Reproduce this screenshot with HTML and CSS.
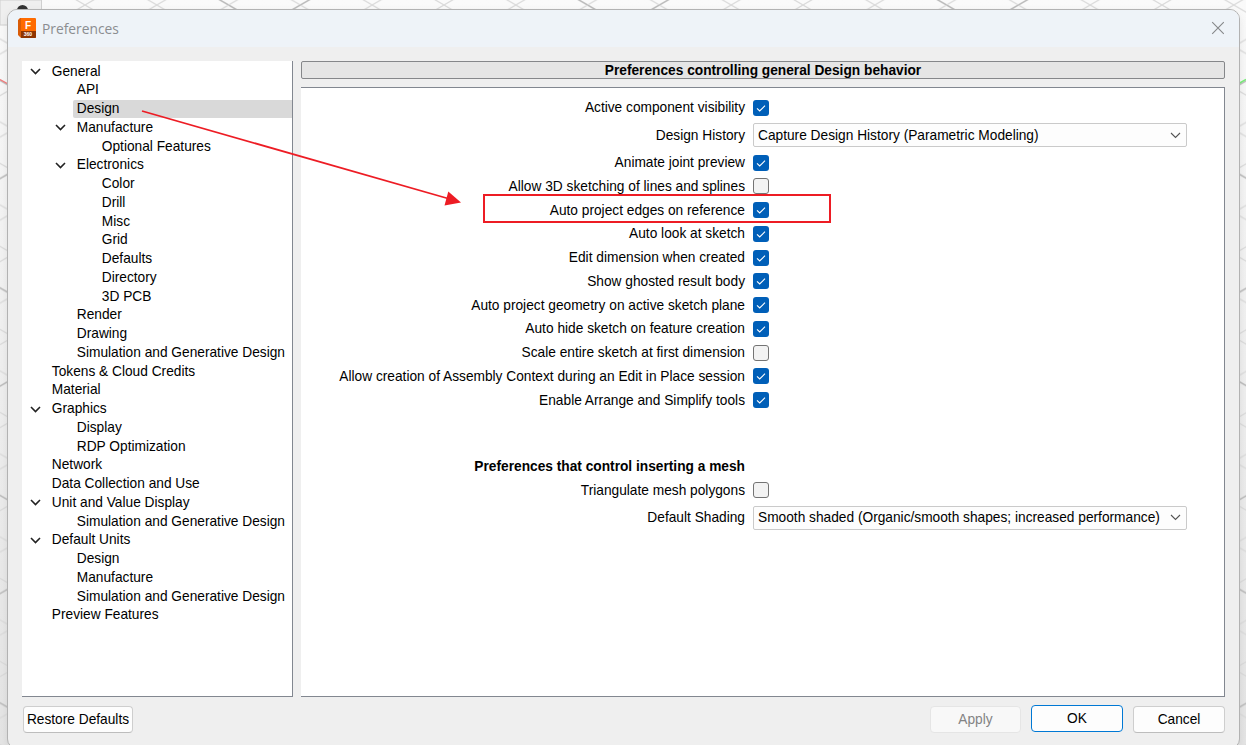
FILE: index.html
```html
<!DOCTYPE html>
<html lang="en">
<head>
<meta charset="utf-8">
<title>Preferences</title>
<link rel="stylesheet" href="styles.css">
</head>
<body>
<svg class="canvas" width="1246" height="745" aria-hidden="true">
  <defs>
    <linearGradient id="sky" x1="0" y1="0" x2="0" y2="1"><stop offset="0" stop-color="#fafafa"/><stop offset=".25" stop-color="#f4f4f4"/><stop offset="1" stop-color="#e4e4e4"/></linearGradient>
    <pattern id="minor" x="85" y="5" width="71.8" height="41.5" patternUnits="userSpaceOnUse"><path d="M0 0L71.8 41.5M0 41.5L71.8 0" stroke="#dadada" stroke-width="1.2"/></pattern>
    <pattern id="major" x="228.6" y="5" width="359" height="207.5" patternUnits="userSpaceOnUse"><path d="M0 0L359 207.5M0 41.5L71.8 0M71.8 207.5L359 41.5" stroke="#b8b8b8" stroke-width="1.3"/></pattern>
  </defs>
  <rect width="1246" height="745" fill="url(#sky)"/>
  <rect width="1246" height="745" fill="url(#minor)"/>
  <rect width="1246" height="745" fill="url(#major)"/>
  <path d="M0 79.5L9 84.5" stroke="#f57b7b" stroke-width="1.3"/>
  <path d="M1238 84L1246 79.5" stroke="#79ee79" stroke-width="1.5"/>
  <path d="M0 0H41.5V25H0Z" fill="#efefef" stroke="#d0d0d0"/>
  <circle cx="22.5" cy="10.500" r="5.5" fill="#333"/>
</svg>
<main class="dialog">
  <header class="titlebar">
    <svg class="logo" width="18" height="20" viewBox="0 0 18 20"><path d="M2 0H16.5Q18 0 18 1.5V19Q18 20 17 20H3L0 17V2Z" fill="#d95c08"/><path d="M3 0H16.5Q18 0 18 1.5V13H3Z" fill="#ff6b00"/><path d="M3 13H18V19Q18 20 17 20H3Z" fill="#8f3500"/><text x="7" y="10.5" class="logo-letter">F</text><text x="5.8" y="18.2" class="logo-number">360</text></svg>
    <h1 class="title">Preferences</h1>
    <svg class="close" width="14" height="14" viewBox="0 0 14 14"><path d="M1.2 1.2L12.8 12.8M12.8 1.2L1.2 12.8" fill="none" stroke="#858789" stroke-width="1.1"/></svg>
  </header>
  <div class="content">
    <nav class="tree">
      <div class="node open"><svg class="twist" viewBox="0 0 11 7"><path d="M1 1L5.5 5.5L10 1"/></svg><span class="name">General</span></div>
      <div class="node l1"><span class="name">API</span></div>
      <div class="node l1"><span class="name selected">Design</span></div>
      <div class="node l1 open"><svg class="twist" viewBox="0 0 11 7"><path d="M1 1L5.5 5.5L10 1"/></svg><span class="name">Manufacture</span></div>
      <div class="node l2"><span class="name">Optional Features</span></div>
      <div class="node l1 open"><svg class="twist" viewBox="0 0 11 7"><path d="M1 1L5.5 5.5L10 1"/></svg><span class="name">Electronics</span></div>
      <div class="node l2"><span class="name">Color</span></div>
      <div class="node l2"><span class="name">Drill</span></div>
      <div class="node l2"><span class="name">Misc</span></div>
      <div class="node l2"><span class="name">Grid</span></div>
      <div class="node l2"><span class="name">Defaults</span></div>
      <div class="node l2"><span class="name">Directory</span></div>
      <div class="node l2"><span class="name">3D PCB</span></div>
      <div class="node l1"><span class="name">Render</span></div>
      <div class="node l1"><span class="name">Drawing</span></div>
      <div class="node l1"><span class="name">Simulation and Generative Design</span></div>
      <div class="node"><span class="name">Tokens &amp; Cloud Credits</span></div>
      <div class="node"><span class="name">Material</span></div>
      <div class="node open"><svg class="twist" viewBox="0 0 11 7"><path d="M1 1L5.5 5.5L10 1"/></svg><span class="name">Graphics</span></div>
      <div class="node l1"><span class="name">Display</span></div>
      <div class="node l1"><span class="name">RDP Optimization</span></div>
      <div class="node"><span class="name">Network</span></div>
      <div class="node"><span class="name">Data Collection and Use</span></div>
      <div class="node open"><svg class="twist" viewBox="0 0 11 7"><path d="M1 1L5.5 5.5L10 1"/></svg><span class="name">Unit and Value Display</span></div>
      <div class="node l1"><span class="name">Simulation and Generative Design</span></div>
      <div class="node open"><svg class="twist" viewBox="0 0 11 7"><path d="M1 1L5.5 5.5L10 1"/></svg><span class="name">Default Units</span></div>
      <div class="node l1"><span class="name">Design</span></div>
      <div class="node l1"><span class="name">Manufacture</span></div>
      <div class="node l1"><span class="name">Simulation and Generative Design</span></div>
      <div class="node"><span class="name">Preview Features</span></div>
    </nav>
    <section class="pane">
      <h2 class="banner">Preferences controlling general Design behavior</h2>
      <div class="form">
        <div class="field"><span class="label">Active component visibility</span><span class="check on"><svg viewBox="0 0 16 16"><path d="M4 8.3L6.7 11L12 5.7"/></svg></span></div>
        <div class="field tall"><span class="label">Design History</span><div class="select"><span>Capture Design History (Parametric Modeling)</span><svg class="caret" viewBox="0 0 11 7"><path d="M1 1L5.5 5.5L10 1"/></svg></div></div>
        <div class="field"><span class="label">Animate joint preview</span><span class="check on"><svg viewBox="0 0 16 16"><path d="M4 8.3L6.7 11L12 5.7"/></svg></span></div>
        <div class="field"><span class="label">Allow 3D sketching of lines and splines</span><span class="check"></span></div>
        <div class="field"><span class="label">Auto project edges on reference</span><span class="check on"><svg viewBox="0 0 16 16"><path d="M4 8.3L6.7 11L12 5.7"/></svg></span></div>
        <div class="field"><span class="label">Auto look at sketch</span><span class="check on"><svg viewBox="0 0 16 16"><path d="M4 8.3L6.7 11L12 5.7"/></svg></span></div>
        <div class="field"><span class="label">Edit dimension when created</span><span class="check on"><svg viewBox="0 0 16 16"><path d="M4 8.3L6.7 11L12 5.7"/></svg></span></div>
        <div class="field"><span class="label">Show ghosted result body</span><span class="check on"><svg viewBox="0 0 16 16"><path d="M4 8.3L6.7 11L12 5.7"/></svg></span></div>
        <div class="field"><span class="label">Auto project geometry on active sketch plane</span><span class="check on"><svg viewBox="0 0 16 16"><path d="M4 8.3L6.7 11L12 5.7"/></svg></span></div>
        <div class="field"><span class="label">Auto hide sketch on feature creation</span><span class="check on"><svg viewBox="0 0 16 16"><path d="M4 8.3L6.7 11L12 5.7"/></svg></span></div>
        <div class="field"><span class="label">Scale entire sketch at first dimension</span><span class="check"></span></div>
        <div class="field"><span class="label">Allow creation of Assembly Context during an Edit in Place session</span><span class="check on"><svg viewBox="0 0 16 16"><path d="M4 8.3L6.7 11L12 5.7"/></svg></span></div>
        <div class="field"><span class="label">Enable Arrange and Simplify tools</span><span class="check on"><svg viewBox="0 0 16 16"><path d="M4 8.3L6.7 11L12 5.7"/></svg></span></div>
        <div class="field mesh"><span class="label heading">Preferences that control inserting a mesh</span></div>
        <div class="field"><span class="label">Triangulate mesh polygons</span><span class="check"></span></div>
        <div class="field tall"><span class="label">Default Shading</span><div class="select"><span>Smooth shaded (Organic/smooth shapes; increased performance)</span><svg class="caret" viewBox="0 0 11 7"><path d="M1 1L5.5 5.5L10 1"/></svg></div></div>
      </div>
    </section>
  </div>
  <footer class="actions">
    <button class="btn restore">Restore Defaults</button>
    <button class="btn apply" disabled>Apply</button>
    <button class="btn primary">OK</button>
    <button class="btn">Cancel</button>
  </footer>
</main>
<svg class="markup" width="1246" height="745" aria-hidden="true">
  <path d="M142 111L448 198.5" stroke="#ed1c24" stroke-width="1.8"/>
  <path d="M448.3 191.5L461 202.5L444.5 205.5Z" fill="#ed1c24"/>
  <rect x="484" y="195" width="346" height="27" fill="none" stroke="#ed1c24" stroke-width="2"/>
</svg>
</body>
</html>
```

FILE: styles.css
```css
* { box-sizing: border-box; }
body {
  margin: 0;
  width: 1246px;
  height: 745px;
  overflow: hidden;
  position: relative;
  padding: 9px 7px 0 7px;
  font-family: "Liberation Sans", Arial, sans-serif;
  font-size: 13.73px;
  color: #000;
}
.canvas, .markup { position: absolute; left: 0; top: 0; }
.markup { pointer-events: none; }
.dialog {
  position: relative;
  width: 1233px;
  height: 740px;
  border: 1px solid #b2b2b2;
  border-radius: 10px;
  background: #efefef;
  box-shadow: 0 3px 9px rgba(0, 0, 0, .08);
  overflow: hidden;
}
.titlebar {
  height: 37px;
  display: flex;
  align-items: center;
  padding: 0 14px 2px 10px;
  background: #eef3f8;
}
.title {
  margin: 1px auto 0 6px;
  font: 400 13.8px "Open Sans", sans-serif;
  color: #8b8d90;
}
.logo-letter { font: 700 10px "Liberation Sans", sans-serif; fill: #fff; }
.logo-number { font: 700 5px "Liberation Sans", sans-serif; fill: #fff; }
.content {
  display: flex;
  gap: 8px;
  height: 636px;
  margin: 14px 14px 0 14px;
}
.tree {
  width: 271px;
  background: #fff;
  border: solid #828790;
  border-width: 0 1px 1px 0;
  padding-top: 1.2px;
}
.node {
  display: flex;
  align-items: center;
  height: 18.75px;
  padding-left: 26px;
}
.node.l1 { padding-left: 51px; }
.node.l2 { padding-left: 76px; }
.node.open { padding-left: 8px; }
.node.l1.open { padding-left: 33px; }
.twist { width: 11px; height: 7px; margin-right: 7px; }
.twist path { fill: none; stroke: #222; stroke-width: 1.6; }
.name {
  flex: 1;
  padding-left: 3.8px;
  line-height: 18px;
  white-space: nowrap;
}
.selected { background: #d9d9d9; border-radius: 2px 0 0 2px; }
.pane {
  width: 924px;
  display: flex;
  flex-direction: column;
  gap: 8px;
}
.banner {
  height: 18px;
  margin: 0;
  border: 1px solid #85878a;
  border-radius: 2px;
  background: #e5e5e5;
  font-size: 13.73px;
  line-height: 17px;
  text-align: center;
}
.form {
  flex: 1;
  background: #fff;
  border: solid #828790;
  border-width: 1px 1px 1px 0;
  padding-top: 8px;
}
.field {
  display: grid;
  grid-template-columns: 444px 434px;
  column-gap: 8px;
  align-items: center;
  height: 23.76px;
}
.field.tall { height: 31px; }
.field.mesh { margin-top: 42.5px; }
.label { text-align: right; white-space: nowrap; }
.heading { font-weight: 700; }
.check {
  width: 16px;
  height: 16px;
  border: 1px solid #747474;
  border-radius: 3px;
  background: #f3f3f3;
}
.check.on { border: 0; background: #005fb8; }
.check svg { display: block; }
.check path { fill: none; stroke: #fff; stroke-width: 1.1; }
.select {
  display: flex;
  align-items: center;
  justify-content: space-between;
  height: 24px;
  padding: 0 5px 0 4px;
  border: 1px solid #cacaca;
  border-radius: 2px;
  background: #fdfdfd;
  white-space: nowrap;
}
.caret { width: 11px; height: 7px; }
.caret path { fill: none; stroke: #555; stroke-width: 1.1; }
.actions {
  display: flex;
  align-items: flex-start;
  gap: 10px;
  padding: 9px 14px 0 15px;
}
.btn {
  width: 92px;
  height: 27px;
  padding: 0;
  border: 1px solid #cecece;
  border-bottom-color: #bdbdbd;
  border-radius: 4px;
  background: #fdfdfd;
  color: #000;
  font: 13.73px "Liberation Sans", Arial, sans-serif;
}
.btn.restore { width: 110px; margin-right: auto; }
.btn.apply { width: 91px; }
.btn:disabled { color: #838383; border-color: #e5e5e5; background: #f8f8f8; }
.btn.primary { border-color: #0078d4; margin-top: -1px; }
```
